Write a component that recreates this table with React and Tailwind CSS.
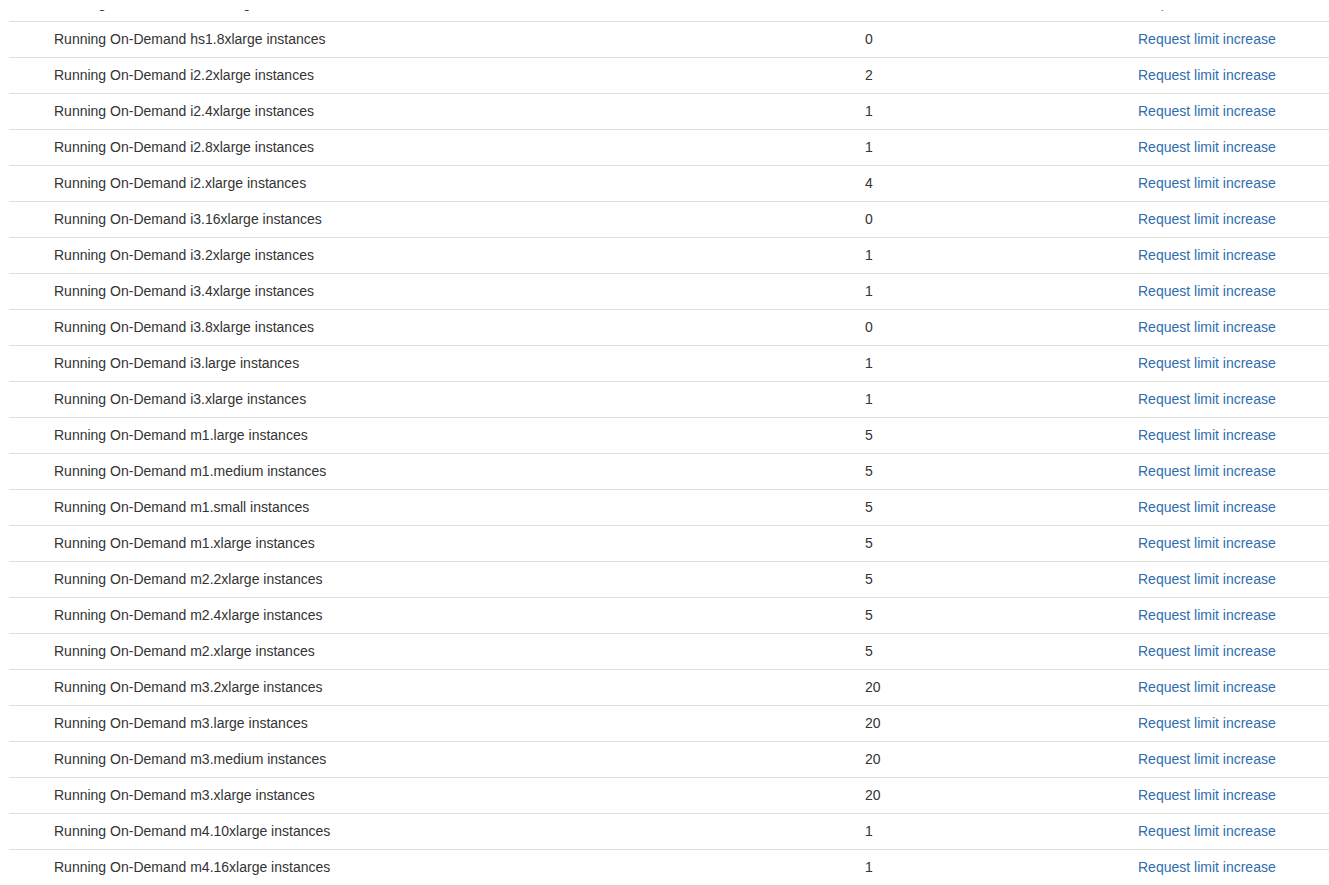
const rows = [
  ['hi1.4xlarge', '2'],
  ['hs1.8xlarge', '0'],
  ['i2.2xlarge', '2'],
  ['i2.4xlarge', '1'],
  ['i2.8xlarge', '1'],
  ['i2.xlarge', '4'],
  ['i3.16xlarge', '0'],
  ['i3.2xlarge', '1'],
  ['i3.4xlarge', '1'],
  ['i3.8xlarge', '0'],
  ['i3.large', '1'],
  ['i3.xlarge', '1'],
  ['m1.large', '5'],
  ['m1.medium', '5'],
  ['m1.small', '5'],
  ['m1.xlarge', '5'],
  ['m2.2xlarge', '5'],
  ['m2.4xlarge', '5'],
  ['m2.xlarge', '5'],
  ['m3.2xlarge', '20'],
  ['m3.large', '20'],
  ['m3.medium', '20'],
  ['m3.xlarge', '20'],
  ['m4.10xlarge', '1'],
  ['m4.16xlarge', '1'],
];

export default function App() {
  return (
    <div className="relative h-[885px] overflow-hidden bg-white font-['Liberation_Sans',Arial,sans-serif] text-[14px] text-[#333]">
      {/* fixed header strip overlapping the scrolled table */}
      <div className="absolute inset-x-0 top-0 z-10 h-[10px] bg-white" />
      <div className="mt-[-14px] ml-[9px]">
        {rows.map(([type, limit]) => (
          <div key={type} className="flex h-[36px] items-center border-b border-[#ddd]">
            <span className="w-[856px] pl-[45px]">Running On-Demand {type} instances</span>
            <span className="w-[273px]">{limit}</span>
            <a href="#" className="text-[#2f6db0] hover:underline">
              Request limit increase
            </a>
          </div>
        ))}
      </div>
    </div>
  );
}
